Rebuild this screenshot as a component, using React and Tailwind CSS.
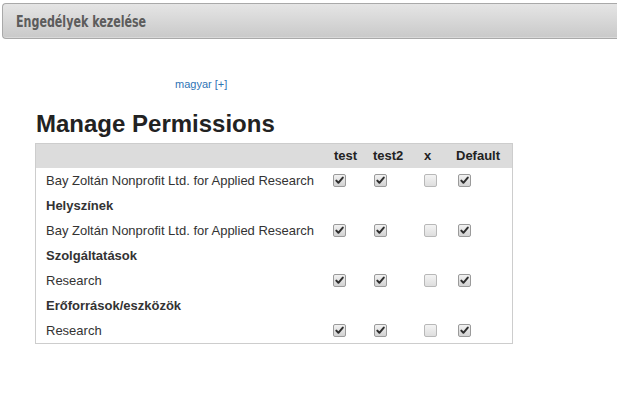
import React from 'react';

const COLUMNS = [
  { label: 'test', boxOffset: 'ml-[4px]' },
  { label: 'test2', boxOffset: 'ml-[6px]' },
  { label: 'x', boxOffset: 'ml-[5px]' },
  { label: 'Default', boxOffset: 'ml-[7px]' }
];

const ROWS = [
  { type: 'item', name: 'Bay Zoltán Nonprofit Ltd. for Applied Research', checks: [true, true, false, true] },
  { type: 'group', name: 'Helyszínek' },
  { type: 'item', name: 'Bay Zoltán Nonprofit Ltd. for Applied Research', checks: [true, true, false, true] },
  { type: 'group', name: 'Szolgáltatások' },
  { type: 'item', name: 'Research', checks: [true, true, false, true] },
  { type: 'group', name: 'Erőforrások/eszközök' },
  { type: 'item', name: 'Research', checks: [true, true, false, true] }
];

const GRID = 'grid grid-cols-[293px_39px_51px_32px_61px]';

function CheckBox({ checked, className = '' }) {
  return (
    <span
      className={`block w-[13px] h-[13px] rounded-[2px] border ${
        checked
          ? 'border-[#9a9a9a] bg-gradient-to-b from-[#f2f2f2] to-[#d2d2d2]'
          : 'border-[#b8b8b8] bg-gradient-to-b from-[#f3f3f3] to-[#dedede]'
      } ${className}`}
    >
      {checked && (
        <svg viewBox="0 0 11 11" className="w-[11px] h-[11px]">
          <path d="M2.3 5.6 L4.4 7.8 L8.8 2.6" fill="none" stroke="#2e2e2e" strokeWidth="2" strokeLinecap="round" strokeLinejoin="round" />
        </svg>
      )}
    </span>
  );
}

export default function App() {
  return (
    <div className="w-[617px] h-[404px] bg-white overflow-hidden font-['Liberation_Sans',Arial,sans-serif]">
      {/* Title bar */}
      <div className="ml-[2px] mt-[3px] h-[36px] rounded-l-[4px] border border-r-0 border-[#a9a9a9] bg-gradient-to-b from-[#e5e5e5] to-[#c9c9c9] flex items-center pl-[13px] shadow-[inset_0_-1px_0_#d9d9d9]">
        <span className="inline-block origin-left scale-x-[0.77] whitespace-nowrap font-['Liberation_Sans_Narrow','DejaVu_Sans_Condensed',sans-serif] font-bold text-[16px] text-[#5c5c5c] pt-[1px]">
          Engedélyek kezelése
        </span>
      </div>

      {/* Language link */}
      <div className="mt-[39px] pl-[175px] text-[11px] leading-[13px] text-[#2f74b5]">
        magyar [+]
      </div>

      <h1 className="mt-[21px] ml-[36px] text-[24px] leading-[24px] font-bold text-[#222]">
        Manage Permissions
      </h1>

      {/* Permissions table */}
      <div className="mt-[7px] ml-[35px] w-[478px] border border-[#cdcdcd] text-[13px] text-[#333]">
        <div className={`${GRID} h-[24px] bg-[#dcdcdc] font-bold text-[#222]`}>
          <div />
          {COLUMNS.map(col => (
            <div key={col.label} className="pl-[5px] flex items-center">{col.label}</div>
          ))}
        </div>
        {ROWS.map((row, i) =>
          row.type === 'group' ? (
            <div key={i} className="h-[25px] flex items-center pl-[10px] font-bold">
              {row.name}
            </div>
          ) : (
            <div key={i} className={`${GRID} h-[25px]`}>
              <div className="pl-[10px] flex items-center whitespace-nowrap">{row.name}</div>
              {COLUMNS.map((col, c) => (
                <div key={col.label} className="flex items-center">
                  <CheckBox checked={row.checks[c]} className={col.boxOffset} />
                </div>
              ))}
            </div>
          )
        )}
      </div>
    </div>
  );
}
